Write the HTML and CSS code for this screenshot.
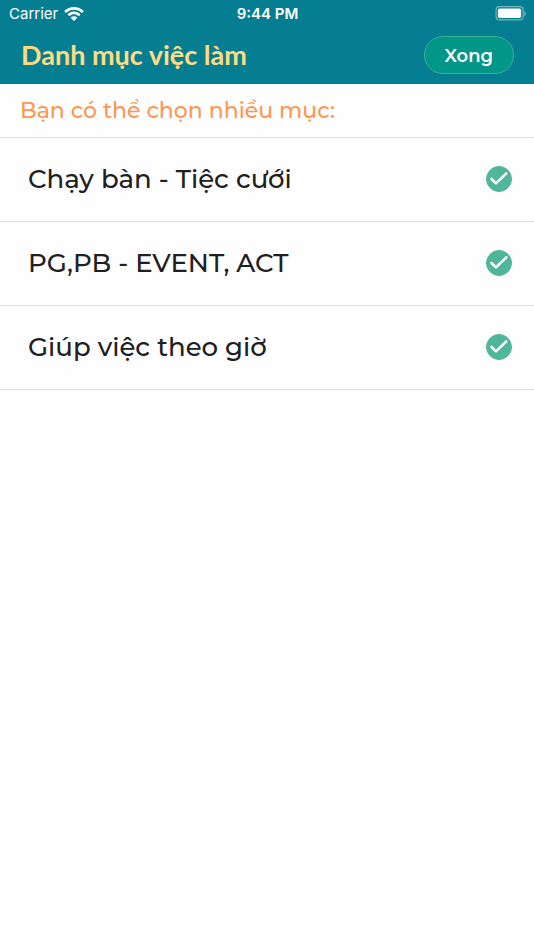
FILE: index.html
```html
<!DOCTYPE html>
<html lang="vi">
<head>
<meta charset="utf-8">
<meta name="viewport" content="width=device-width, initial-scale=1">
<title>Danh mục việc làm</title>
<link rel="stylesheet" href="styles.css">
</head>
<body>
<header class="header">
  <div class="status">
    <div class="carrier">
      <span>Carrier</span>
      <svg class="wifi" viewBox="0 0 20 14" aria-hidden="true">
        <path d="M10 0C6.300 0 2.900 1.450 .5 3.800c-.2.200-.2.500 0 .7l1.200 1.200c.2.200.5.200.7 0C4.400 3.800 7.100 2.700 10 2.700s5.600 1.100 7.600 3c.2.200.5.200.7 0l1.200-1.200c.2-.2.200-.5 0-.7C17.100 1.450 13.700 0 10 0Z"/>
        <path d="M10 4.600c-2.400 0-4.600.9-6.200 2.500-.2.200-.2.500 0 .7L5 9c.2.200.5.200.7 0C6.800 7.900 8.300 7.300 10 7.300s3.200.6 4.300 1.700c.2.200.5.200.7 0l1.200-1.200c.2-.2.200-.5 0-.7C14.600 5.500 12.400 4.600 10 4.600Z"/>
        <path d="M10 9.200c-1.100 0-2.200.4-3 1.100-.2.200-.2.500 0 .7l2.600 2.700c.2.200.6.200.8 0L13 11c.2-.2.200-.5 0-.7-.8-.7-1.900-1.100-3-1.100Z"/>
      </svg>
    </div>
    <time class="clock">9:44 PM</time>
    <svg class="battery" viewBox="0 0 31 15" aria-hidden="true">
      <rect class="battery-case" x="1.100" y=".6" width="27" height="13.300" rx="3.500"/>
      <rect class="battery-level" x="2.900" y="2.600" width="23.200" height="9.400" rx="1.700"/>
      <path class="battery-cap" d="M29.300 5v5c1-.4 1.600-1.300 1.600-2.500S30.300 5.400 29.300 5Z"/>
    </svg>
  </div>
  <div class="titlebar">
    <h1 class="title">Danh mục việc làm</h1>
    <button class="done" type="button">Xong</button>
  </div>
</header>
<main>
  <h2 class="hint">Bạn có thể chọn nhiều mục:</h2>
  <ul class="list">
    <li>
      <label class="row">
        <span>Chạy bàn - Tiệc cưới</span>
        <span class="check">
          <input class="box" type="checkbox" checked>
          <svg class="tick" viewBox="0 0 26 26" aria-hidden="true"><path d="M5.500 13l4.500 4.400L20.300 7.400"/></svg>
        </span>
      </label>
    </li>
    <li>
      <label class="row">
        <span>PG,PB - EVENT, ACT</span>
        <span class="check">
          <input class="box" type="checkbox" checked>
          <svg class="tick" viewBox="0 0 26 26" aria-hidden="true"><path d="M5.500 13l4.500 4.400L20.300 7.400"/></svg>
        </span>
      </label>
    </li>
    <li>
      <label class="row">
        <span>Giúp việc theo giờ</span>
        <span class="check">
          <input class="box" type="checkbox" checked>
          <svg class="tick" viewBox="0 0 26 26" aria-hidden="true"><path d="M5.500 13l4.500 4.400L20.300 7.400"/></svg>
        </span>
      </label>
    </li>
  </ul>
</main>
</body>
</html>
```
FILE: styles.css
```css
* {
  box-sizing: border-box;
}

body {
  margin: 0;
  background: #fefefe;
  color: #202020;
  font-family: Montserrat, Inter, sans-serif;
}

.header {
  background: #057e91;
  color: #fff;
}

.status {
  display: grid;
  grid-template-columns: 1fr auto 1fr;
  align-items: center;
  padding: 0 8px 0 9px;
  font-family: Inter, sans-serif;
  font-size: 15px;
  line-height: 27px;
}

.carrier {
  display: flex;
  align-items: center;
  gap: 6px;
}

.wifi {
  width: 20px;
  height: 14px;
  fill: #fff;
}

.clock {
  font-weight: 600;
}

.battery {
  justify-self: end;
  width: 31px;
  height: 15px;
}

.battery-case {
  fill: none;
  stroke: #75b6c0;
  stroke-width: 1.2;
}

.battery-level {
  fill: #fff;
}

.battery-cap {
  fill: #75b6c0;
}

.titlebar {
  display: flex;
  align-items: center;
  justify-content: space-between;
  padding: 9px 20px 10px 21px;
}

.title {
  margin: 0;
  color: #ffdc83;
  font-family: "Avenir Next", Lato, sans-serif;
  font-size: 27px;
  font-weight: 700;
  line-height: 36px;
}

.done {
  height: 38px;
  padding: 2px 20px 0;
  border: 1px solid #43ae94;
  border-radius: 19px;
  background: #009688;
  color: #fff;
  font: inherit;
  font-size: 18px;
  font-weight: 600;
}

.hint {
  margin: 0;
  padding: 11px 20px 10px;
  border-bottom: 1px solid #dcdcdc;
  color: #ff9650;
  font-size: 22px;
  font-weight: 500;
  line-height: 32px;
}

.list {
  margin: 0;
  padding: 0;
  list-style: none;
}

.row {
  display: flex;
  align-items: center;
  justify-content: space-between;
  padding: 23px 22px 24px 28px;
  border-bottom: 1px solid #dcdcdc;
  font-size: 26px;
  font-weight: 500;
  line-height: 36px;
}

.check {
  display: grid;
}

.box,
.tick {
  grid-area: 1 / 1;
  width: 26px;
  height: 26px;
  margin: 0;
}

.box {
  appearance: none;
  border: 1px solid #50b69a;
  border-radius: 50%;
}

.box:checked {
  background: #50b69a;
}

.tick {
  fill: none;
  stroke: #fff;
  stroke-width: 2.6;
  stroke-linecap: round;
  stroke-linejoin: round;
  pointer-events: none;
}

.box:not(:checked) + .tick {
  visibility: hidden;
}
```
